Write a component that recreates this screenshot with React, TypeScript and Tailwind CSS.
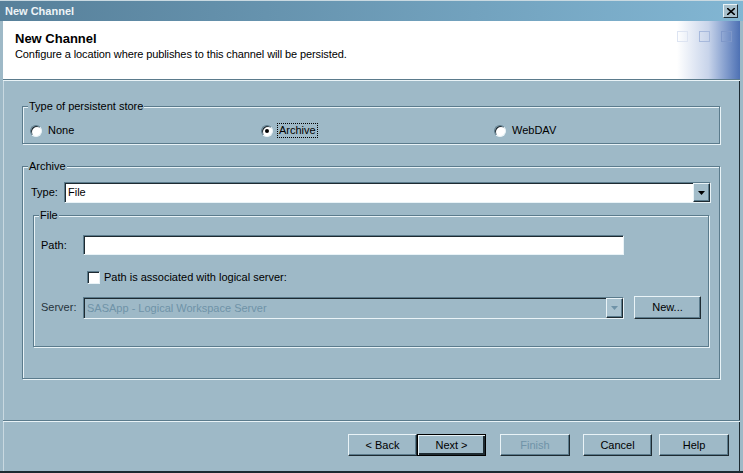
import React from "react";

const font = { fontFamily: '"Liberation Sans", Arial, sans-serif' };

function Etched({
  legend,
  className,
  children,
}: {
  legend: string;
  className: string;
  children?: React.ReactNode;
}) {
  return (
    <div
      className={`relative border border-[#5b7b8c] shadow-[1px_1px_0_#e9f3f7,inset_1px_1px_0_#e9f3f7] ${className}`}
    >
      <span className="absolute -top-[8px] left-[5px] bg-[#9eb9c7] px-[1px] text-[11px] leading-[14px] text-black">
        {legend}
      </span>
      {children}
    </div>
  );
}

function Radio({ label, checked, focused }: { label: string; checked?: boolean; focused?: boolean }) {
  return (
    <div className="flex items-center gap-[4px]">
      <span className="flex h-[12px] w-[12px] items-center justify-center rounded-full border border-t-[#5b7b8c] border-l-[#5b7b8c] border-b-[#e9f3f7] border-r-[#e9f3f7] bg-white shadow-[inset_1px_1px_0_#1d2a31]">
        {checked && <span className="h-[4px] w-[4px] rounded-full bg-black" />}
      </span>
      <span
        className={`text-[11px] leading-[13px] text-black ${
          focused ? "border border-dotted border-black px-[1px]" : "border border-transparent px-[1px]"
        }`}
      >
        {label}
      </span>
    </div>
  );
}

function DropArrow({ disabled }: { disabled?: boolean }) {
  return (
    <div
      className={`flex h-full w-[17px] items-center justify-center border border-t-[#e9f3f7] border-l-[#e9f3f7] border-b-[#1d2a31] border-r-[#1d2a31] shadow-[inset_-1px_-1px_0_#5b7b8c] ${
        disabled ? "bg-[#a9c2cf]" : "bg-[#a3bdca]"
      }`}
    >
      <svg width="7" height="4" viewBox="0 0 7 4">
        <path d="M0 0h7L3.5 4z" fill={disabled ? "#6f93a8" : "#000"} />
      </svg>
    </div>
  );
}

function Button({
  label,
  disabled,
  isDefault,
  className = "",
}: {
  label: string;
  disabled?: boolean;
  isDefault?: boolean;
  className?: string;
}) {
  return (
    <button
      className={`flex h-[22px] items-center justify-center bg-[#9eb9c7] text-[11px] ${
        isDefault
          ? "border border-black shadow-[inset_1px_1px_0_#e9f3f7,inset_-2px_-2px_0_#1d2a31]"
          : "border border-t-[#e9f3f7] border-l-[#e9f3f7] border-b-[#1d2a31] border-r-[#1d2a31] shadow-[inset_-1px_-1px_0_#5b7b8c]"
      } ${disabled ? "text-[#6f93a8]" : "text-black"} ${className}`}
    >
      {label}
    </button>
  );
}

export default function App() {
  return (
    <div
      className="flex h-[473px] w-[743px] flex-col overflow-hidden border-b-2 border-b-[#1d2a31] bg-[#9eb9c7]"
      style={font}
    >
      {/* Title bar */}
      <div className="flex h-[21px] shrink-0 items-center justify-between border-t border-[#c9d9e1] bg-gradient-to-r from-[#57809a] to-[#82b6d3] pl-[5px] pr-[5px]">
        <span className="text-[11px] font-bold leading-none text-[#eef4f7]">New Channel</span>
        <div className="flex h-[14px] w-[15px] items-center justify-center border border-t-[#e9f3f7] border-l-[#e9f3f7] border-b-[#1d2a31] border-r-[#1d2a31] bg-[#a8c0cc]">
          <svg width="8" height="7" viewBox="0 0 8 7">
            <path d="M0 0l8 7M8 0L0 7" stroke="#000" strokeWidth="1.6" />
          </svg>
        </div>
      </div>

      <div className="flex flex-1 flex-col border-l-[3px] border-r-[3px] border-l-[#9eb9c7] border-r-[#9eb9c7] shadow-[inset_1px_0_0_#c9d9e1,inset_-1px_0_0_#1d2a31]">
        {/* Header */}
        <div className="flex h-[59px] shrink-0 border-b border-[#5b7b8c] bg-white shadow-[0_1px_0_#e9f3f7]">
          <div className="flex-1 pl-[12px] pt-[10px]">
            <div className="text-[13px] font-bold leading-[15px] text-black">New Channel</div>
            <div className="mt-[2px] text-[11px] leading-[13px] tracking-[-0.1px] text-black">
              Configure a location where publishes to this channel will be persisted.
            </div>
          </div>
          <div className="flex w-[63px] items-start gap-[11px] bg-gradient-to-r from-white via-[#c8d4ea] to-[#4e71b4] pt-[10px]">
            <span className="h-[11px] w-[11px] border border-[#dde4f2]" />
            <span className="h-[11px] w-[11px] border border-[#a7b9dc]" />
            <span className="h-[11px] w-[11px] border border-[#7f98c9]" />
          </div>
        </div>

        {/* Type of persistent store */}
        <Etched legend="Type of persistent store" className="ml-[19px] mt-[26px] h-[38px] w-[698px]">
          <div className="flex pl-[7px] pt-[16px]">
            <div className="w-[231px]">
              <Radio label="None" />
            </div>
            <div className="w-[233px]">
              <Radio label="Archive" checked focused />
            </div>
            <Radio label="WebDAV" />
          </div>
        </Etched>

        {/* Archive */}
        <Etched legend="Archive" className="ml-[19px] mt-[22px] h-[213px] w-[698px]">
          <div className="flex items-center pl-[8px] pt-[15px]">
            <span className="w-[33px] text-[11px] text-black">Type:</span>
            <div className="flex h-[21px] w-[647px] border border-t-[#5b7b8c] border-l-[#5b7b8c] border-b-[#e9f3f7] border-r-[#e9f3f7] bg-white shadow-[inset_1px_1px_0_#1d2a31]">
              <span className="flex-1 pl-[3px] pt-[3px] text-[11px] leading-[13px] text-black">File</span>
              <DropArrow />
            </div>
          </div>

          <Etched legend="File" className="ml-[10px] mt-[12px] h-[132px] w-[676px]">
            <div className="flex items-center pl-[7px] pt-[19px]">
              <span className="w-[42px] text-[11px] text-black">Path:</span>
              <div className="h-[20px] w-[541px] border border-t-[#5b7b8c] border-l-[#5b7b8c] border-b-[#e9f3f7] border-r-[#e9f3f7] bg-white shadow-[inset_1px_1px_0_#1d2a31]" />
            </div>

            <div className="ml-[53px] mt-[16px] flex items-center gap-[4px]">
              <span className="h-[13px] w-[13px] border border-t-[#5b7b8c] border-l-[#5b7b8c] border-b-[#e9f3f7] border-r-[#e9f3f7] bg-white shadow-[inset_1px_1px_0_#1d2a31]" />
              <span className="text-[11px] leading-[13px] text-black">Path is associated with logical server:</span>
            </div>

            <div className="mt-[12px] flex items-center pl-[7px]">
              <span className="w-[42px] text-[11px] text-[#26343c]">Server:</span>
              <div className="flex h-[22px] w-[541px] border border-t-[#5b7b8c] border-l-[#5b7b8c] border-b-[#e9f3f7] border-r-[#e9f3f7] bg-[#9eb9c7] shadow-[inset_1px_1px_0_#1d2a31]">
                <span className="flex-1 pl-[3px] pt-[4px] text-[11px] leading-[13px] text-[#6f93a8]">
                  SASApp - Logical Workspace Server
                </span>
                <DropArrow disabled />
              </div>
              <Button label="New..." className="ml-[10px] h-[23px] w-[67px]" />
            </div>
          </Etched>
        </Etched>

        {/* Separator */}
        <div className="mt-[41px] h-[2px] shrink-0 border-t border-b border-t-[#5b7b8c] border-b-[#e9f3f7]" />

        {/* Buttons */}
        <div className="mt-[12px] flex pl-[345px]">
          <Button label="< Back" className="w-[69px]" />
          <Button label="Next >" isDefault className="w-[69px]" />
          <Button label="Finish" disabled className="ml-[14px] w-[70px]" />
          <Button label="Cancel" className="ml-[13px] w-[69px]" />
          <Button label="Help" className="ml-[7px] w-[70px]" />
        </div>
      </div>
    </div>
  );
}
